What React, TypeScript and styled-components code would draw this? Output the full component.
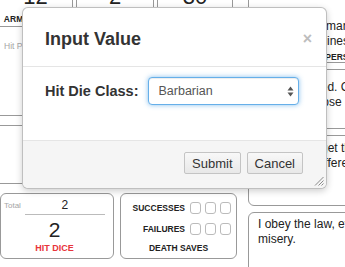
import React from "react";
import styled, { createGlobalStyle } from "styled-components";

const GlobalStyle = createGlobalStyle`
  html, body {
    margin: 0;
    padding: 0;
    background: #fff;
  }
  body {
    font-family: "Liberation Sans", Arial, Helvetica, sans-serif;
    color: #222;
    -webkit-font-smoothing: antialiased;
  }
  * {
    box-sizing: border-box;
  }
`;

const stats = [
  { label: "Armor Class", value: "12", width: 75, ml: -2 },
  { label: "Initiative", value: "2", width: 78, ml: 0 },
  { label: "Speed", value: "30", width: 76, ml: 0 },
];

const App: React.FC = () => {
  return (
    <Page>
      <GlobalStyle />
      <Sheet>
        <LeftCol>
          <TopRow>
            {stats.map((s) => (
              <StatBox key={s.label} $width={s.width} $ml={s.ml}>
                <StatValue>{s.value}</StatValue>
                <StatLabel>{s.label}</StatLabel>
              </StatBox>
            ))}
          </TopRow>
          <HpBox $height={89}>
            <GrayLabel>Hit Point Maximum</GrayLabel>
          </HpBox>
          <HpBox $height={59} $top>
            <GrayLabel />
          </HpBox>
          <BottomRow>
            <HitDiceBox>
              <TotalRow>
                <TotalLabel>Total</TotalLabel>
                <TotalValue>2</TotalValue>
              </TotalRow>
              <BigValue>2</BigValue>
              <RedLabel>Hit Dice</RedLabel>
            </HitDiceBox>
            <DeathBox>
              <SaveRow>
                <SaveLabel>Successes</SaveLabel>
                <Checks>
                  <Check />
                  <Check />
                  <Check />
                </Checks>
              </SaveRow>
              <SaveRow $gap>
                <SaveLabel>Failures</SaveLabel>
                <Checks>
                  <Check />
                  <Check />
                  <Check />
                </Checks>
              </SaveRow>
              <DeathLabel>Death Saves</DeathLabel>
            </DeathBox>
          </BottomRow>
        </LeftCol>

        <RightCol>
          <TraitBox $height={83} $pt={38}>
            <TraitText>
              A stern grammarian, I correct everyone's speech.
              <br />
              I'll recite old lines. Poems, plays, anything.
            </TraitText>
            <TraitLabel>Personality Traits</TraitLabel>
          </TraitBox>
          <TraitBox $height={60} $pt={10}>
            <TraitText>
              Honor learned. Change is the only path to strength.
              <br />
              I'll protect those close to me, whatever the cost.
            </TraitText>
            <TraitLabel>Ideals</TraitLabel>
          </TraitBox>
          <TraitBox $height={71} $pt={5}>
            <TraitText>
              I'd never forget the village that raised me.
              <br />
              I'll make a difference for the common folk.
            </TraitText>
            <TraitLabel>Bonds</TraitLabel>
          </TraitBox>
          <TraitBox $height={80} $pt={4}>
            <TraitText>
              I obey the law, even if the law causes
              <br />
              misery.
            </TraitText>
          </TraitBox>
        </RightCol>
      </Sheet>

      <Modal>
        <ModalHeader>
          <ModalTitle>Input Value</ModalTitle>
          <CloseButton>×</CloseButton>
        </ModalHeader>
        <ModalBody>
          <FieldLabel htmlFor="hit-die">Hit Die Class:</FieldLabel>
          <SelectWrap>
            <Select id="hit-die" defaultValue="Barbarian">
              <option>Barbarian</option>
              <option>Bard</option>
              <option>Cleric</option>
              <option>Druid</option>
              <option>Fighter</option>
              <option>Wizard</option>
            </Select>
            <Arrows width="7" height="11" viewBox="0 0 7 11">
              <path d="M3.5 0.5 L6.5 4.5 L0.5 4.5 Z" fill="#555" />
              <path d="M3.5 10.5 L6.5 6.5 L0.5 6.5 Z" fill="#555" />
            </Arrows>
          </SelectWrap>
        </ModalBody>
        <ModalFooter>
          <Button>Submit</Button>
          <Button>Cancel</Button>
        </ModalFooter>
        <Grip width="10" height="10" viewBox="0 0 10 10">
          <path d="M9.5 1 L1 9.5 M9.5 4.5 L4.5 9.5 M9.5 7.5 L7.5 9.5" stroke="#8a8a8a" strokeWidth="1" />
        </Grip>
      </Modal>
    </Page>
  );
};

export default App;

const Page = styled.div`
  position: relative;
  width: 345px;
  height: 267px;
  overflow: hidden;
`;

const Sheet = styled.div`
  display: flex;
  width: 484px;
  margin-top: -20px;
`;

const LeftCol = styled.div`
  width: 237px;
  display: flex;
  flex-direction: column;
`;

const TopRow = styled.div`
  display: flex;
  gap: 3px;
  height: 47px;
`;

const StatBox = styled.div<{ $width: number; $ml: number }>`
  width: ${({ $width }) => $width}px;
  margin-left: ${({ $ml }) => $ml}px;
  border: 1px solid #999;
  border-top: none;
  display: flex;
  flex-direction: column;
  align-items: center;
  padding-top: 6px;
`;

const StatValue = styled.div`
  font-size: 22px;
  line-height: 22px;
`;

const StatLabel = styled.div`
  font-size: 8.5px;
  line-height: 10px;
  font-weight: bold;
  text-transform: uppercase;
  margin-top: 6px;
  white-space: nowrap;
`;

const HpBox = styled.div<{ $height: number; $top?: boolean }>`
  height: ${({ $height }) => $height}px;
  width: 239px;
  margin-left: -2px;
  margin-top: ${({ $top }) => ($top ? "9px" : "0")};
  border: 1px solid #999;
  border-top: ${({ $top }) => ($top ? "1px solid #999" : "none")};
  padding: 14px 0 0 5px;
`;

const GrayLabel = styled.div`
  font-size: 8.5px;
  line-height: 10px;
  color: #a5a5a5;
`;

const BottomRow = styled.div`
  display: flex;
  gap: 6px;
  margin-top: 9px;
  height: 66px;
`;

const HitDiceBox = styled.div`
  width: 114px;
  border: 1px solid #999;
  border-radius: 6px;
  display: flex;
  flex-direction: column;
  padding: 5px 8px 0 3px;
`;

const TotalRow = styled.div`
  display: flex;
  align-items: flex-end;
  gap: 4px;
`;

const TotalLabel = styled.div`
  font-size: 8px;
  line-height: 12px;
  color: #a5a5a5;
  padding-bottom: 3px;
`;

const TotalValue = styled.div`
  flex: 1;
  text-align: center;
  font-size: 12px;
  line-height: 12px;
  padding-bottom: 3px;
  border-bottom: 1px solid #bbb;
`;

const BigValue = styled.div`
  margin-top: 3px;
  font-size: 21px;
  line-height: 24px;
  text-align: center;
`;

const RedLabel = styled.div`
  margin-top: 1px;
  font-size: 9px;
  line-height: 10px;
  font-weight: bold;
  color: #e8353b;
  text-align: center;
  text-transform: uppercase;
`;

const DeathBox = styled.div`
  width: 117px;
  border: 1px solid #999;
  border-radius: 6px;
  display: flex;
  flex-direction: column;
  padding: 8px 5px 0 0;
`;

const SaveRow = styled.div<{ $gap?: boolean }>`
  display: flex;
  align-items: center;
  justify-content: flex-end;
  gap: 5px;
  margin-top: ${({ $gap }) => ($gap ? "9px" : "0")};
`;

const SaveLabel = styled.div`
  font-size: 8.5px;
  font-weight: bold;
  text-transform: uppercase;
`;

const Checks = styled.div`
  display: flex;
  gap: 4px;
`;

const Check = styled.div`
  width: 11px;
  height: 12px;
  border: 1px solid #bbb;
  border-radius: 3px;
`;

const DeathLabel = styled.div`
  margin-top: 8px;
  font-size: 8.5px;
  line-height: 10px;
  font-weight: bold;
  text-align: center;
  text-transform: uppercase;
  padding-left: 5px;
`;

const RightCol = styled.div`
  width: 236px;
  margin-left: 11px;
  display: flex;
  flex-direction: column;
  gap: 6px;
`;

const TraitBox = styled.div<{ $height: number; $pt: number }>`
  flex: none;
  height: ${({ $height }) => $height}px;
  border: 1px solid #999;
  border-radius: 6px;
  padding: ${({ $pt }) => $pt}px 9px 0;
  display: flex;
  flex-direction: column;
`;

const TraitText = styled.div`
  font-size: 12px;
  line-height: 15px;
  white-space: nowrap;
  color: #222;
`;

const TraitLabel = styled.div`
  margin-top: auto;
  padding-left: 12px;
  font-size: 8.5px;
  line-height: 10px;
  font-weight: bold;
  text-align: center;
  text-transform: uppercase;
  white-space: nowrap;
`;

const Modal = styled.div`
  position: absolute;
  left: 22px;
  top: 7px;
  width: 305px;
  height: 182px;
  background: #fff;
  border: 1px solid rgba(0, 0, 0, 0.25);
  border-radius: 6px;
  box-shadow: 0 2px 7px rgba(0, 0, 0, 0.2);
  display: flex;
  flex-direction: column;
  overflow: hidden;
`;

const ModalHeader = styled.div`
  height: 59px;
  flex: none;
  display: flex;
  align-items: center;
  justify-content: space-between;
  padding: 3px 14px 0 22px;
  border-bottom: 1px solid #e5e5e5;
`;

const ModalTitle = styled.h2`
  margin: 0;
  font-size: 18px;
  line-height: 20px;
  font-weight: bold;
  color: #333;
`;

const CloseButton = styled.span`
  font-size: 16px;
  line-height: 1;
  font-weight: bold;
  color: #bdbdbd;
  cursor: pointer;
`;

const ModalBody = styled.div`
  height: 73px;
  flex: none;
  display: flex;
  align-items: center;
  gap: 10px;
  padding: 10px 22px 35px;
`;

const FieldLabel = styled.label`
  font-size: 14.5px;
  font-weight: bold;
  color: #333;
`;

const SelectWrap = styled.div`
  position: relative;
  width: 151px;
  height: 28px;
`;

const Select = styled.select`
  appearance: none;
  width: 100%;
  height: 100%;
  margin: 0;
  padding: 0 24px 0 9px;
  font-family: inherit;
  font-size: 12.5px;
  color: #555;
  background: #fff;
  border: 1px solid #66afe9;
  border-radius: 4px;
  outline: none;
  box-shadow: inset 0 1px 1px rgba(0, 0, 0, 0.075), 0 0 5px rgba(102, 175, 233, 0.8);
`;

const Arrows = styled.svg`
  position: absolute;
  right: 5px;
  top: 9px;
  pointer-events: none;
`;

const ModalFooter = styled.div`
  flex: 1;
  display: flex;
  justify-content: flex-end;
  align-items: flex-start;
  gap: 6px;
  padding: 11px 23px 0 0;
  background: #f5f5f5;
  border-top: 1px solid #e5e5e5;
`;

const Button = styled.button`
  height: 22px;
  padding: 0 7px;
  font-family: inherit;
  font-size: 13px;
  color: #333;
  background: linear-gradient(#f8f8f8, #e8e8e8);
  border: 1px solid #c4c4c4;
  border-radius: 2px;
  cursor: pointer;
`;

const Grip = styled.svg`
  position: absolute;
  right: 2px;
  bottom: 2px;
`;
